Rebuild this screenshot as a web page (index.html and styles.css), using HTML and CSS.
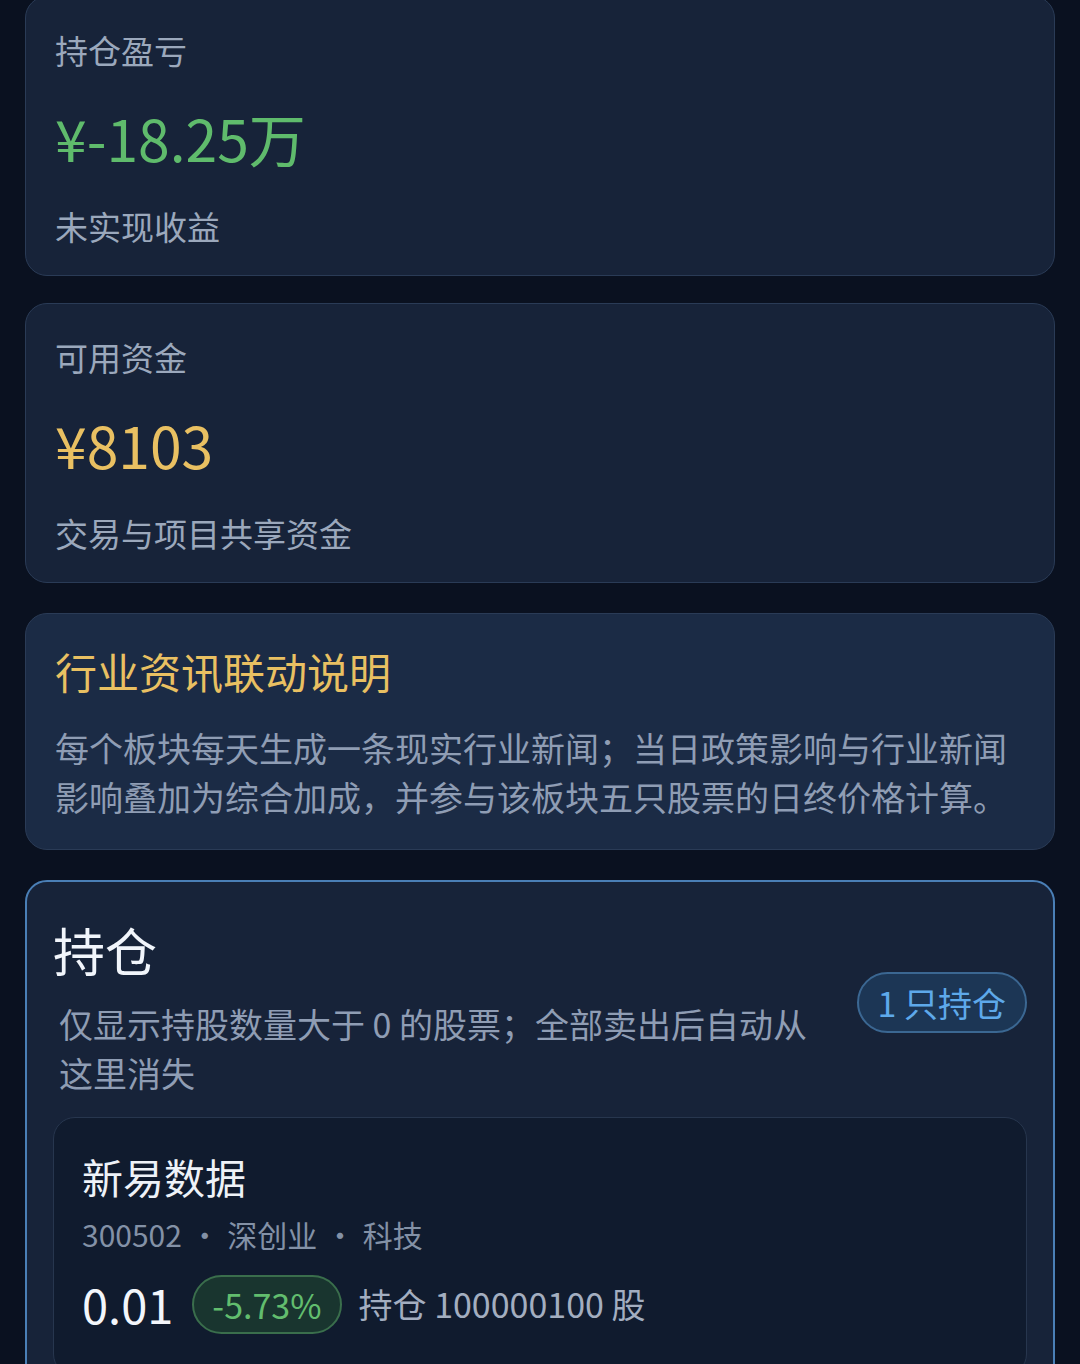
FILE: index.html
```html
<!DOCTYPE html>
<html lang="zh-CN">
<head>
<meta charset="utf-8">
<title>持仓</title>
<link rel="stylesheet" href="styles.css">
</head>
<body>
<main class="page">
  <section class="card stat first">
    <div class="stat-label">持仓盈亏</div>
    <div class="stat-value green">¥-18.25万</div>
    <div class="stat-sub">未实现收益</div>
  </section>

  <section class="card stat">
    <div class="stat-label">可用资金</div>
    <div class="stat-value gold">¥8103</div>
    <div class="stat-sub">交易与项目共享资金</div>
  </section>

  <section class="card note">
    <h2 class="note-title">行业资讯联动说明</h2>
    <p class="note-body">每个板块每天生成一条现实行业新闻；当日政策影响与行业新闻影响叠加为综合加成，并参与该板块五只股票的日终价格计算。</p>
  </section>

  <section class="card holdings">
    <header class="hold-head">
      <div class="hold-head-text">
        <h2 class="hold-title">持仓</h2>
        <p class="hold-desc">仅显示持股数量大于 0 的股票；全部卖出后自动从这里消失</p>
      </div>
      <span class="count-badge">1 只持仓</span>
    </header>

    <article class="stock">
      <div class="stock-name">新易数据</div>
      <div class="stock-meta">300502 <span class="dot">·</span> 深创业 <span class="dot">·</span> 科技</div>
      <div class="stock-row">
        <span class="stock-price">0.01</span>
        <span class="change-pill">-5.73%</span>
        <span class="stock-qty">持仓 100000100 股</span>
      </div>
    </article>
  </section>
</main>
</body>
</html>
```
FILE: styles.css
```css
* { box-sizing: border-box; }

html, body {
  margin: 0;
  padding: 0;
  background: #0a1120;
}

body {
  font-family: "Noto Sans CJK SC", "Noto Sans", sans-serif;
  color: #e9eef6;
  height: 1364px;
  overflow: hidden;
}

.page {
  display: flex;
  flex-direction: column;
  gap: 27px;
  padding: 0 25px;
}

.card {
  background: #172339;
  border: 1px solid #2a3b56;
  border-radius: 22px;
}

.first { margin-top: -4px; }

.stat {
  padding: 29px 29px 25px;
}

.stat-label,
.stat-sub {
  font-size: 33px;
  line-height: 48px;
  color: #9ba8bc;
}

.stat-value {
  margin-top: 31px;
  font-size: 57px;
  line-height: 64px;
}

.stat-sub { margin-top: 33px; }

.green { color: #5fbb6c; }
.gold { color: #e9c062; }

.note {
  background: #1b2b45;
  padding: 29px 29px 28px;
  margin-top: 3px;
}

.note-title {
  margin: 0;
  font-size: 42px;
  line-height: 56px;
  font-weight: 400;
  color: #e9c062;
}

.note-body {
  margin: 24px 0 0;
  font-size: 34px;
  line-height: 49px;
  color: #8f9db4;
}

.holdings {
  border: 2px solid #4a7fb6;
  padding: 36px 26px 40px;
  margin-top: 3px;
}

.hold-head {
  display: flex;
  align-items: center;
  gap: 24px;
}

.hold-head-text { flex: 1; }

.hold-title {
  margin: 0;
  font-size: 52px;
  line-height: 64px;
  font-weight: 400;
  color: #f1f5fb;
}

.hold-desc {
  margin: 17px 0 0 6px;
  font-size: 34px;
  line-height: 49px;
  color: #8f9db4;
}

.count-badge {
  flex: none;
  margin-top: -10px;
  padding: 0 19px;
  height: 61px;
  line-height: 57px;
  font-size: 34px;
  color: #5ea9ea;
  background: #1c3655;
  border: 2px solid #3b6792;
  border-radius: 31px;
}

.stock {
  margin-top: 20px;
  background: #101b2e;
  border: 1px solid #27364e;
  border-radius: 22px;
  padding: 32px 28px 40px;
}

.stock-name {
  font-size: 41px;
  line-height: 52px;
  color: #eef2f8;
}

.stock-meta {
  margin-top: 11px;
  font-size: 30px;
  line-height: 42px;
  color: #8391a6;
}

.dot { margin: 0 1px; }

.stock-row {
  margin-top: 18px;
  display: flex;
  align-items: center;
  height: 62px;
}

.stock-price {
  font-size: 47px;
  line-height: 62px;
  color: #f3f6fb;
}

.change-pill {
  margin-left: 19px;
  padding: 0 18px;
  height: 59px;
  line-height: 55px;
  font-size: 34px;
  color: #62bd6e;
  background: #19352f;
  border: 2px solid #3a6e4c;
  border-radius: 30px;
}

.stock-qty {
  margin-left: 17px;
  font-size: 34px;
  line-height: 62px;
  color: #a3aec0;
}
```
